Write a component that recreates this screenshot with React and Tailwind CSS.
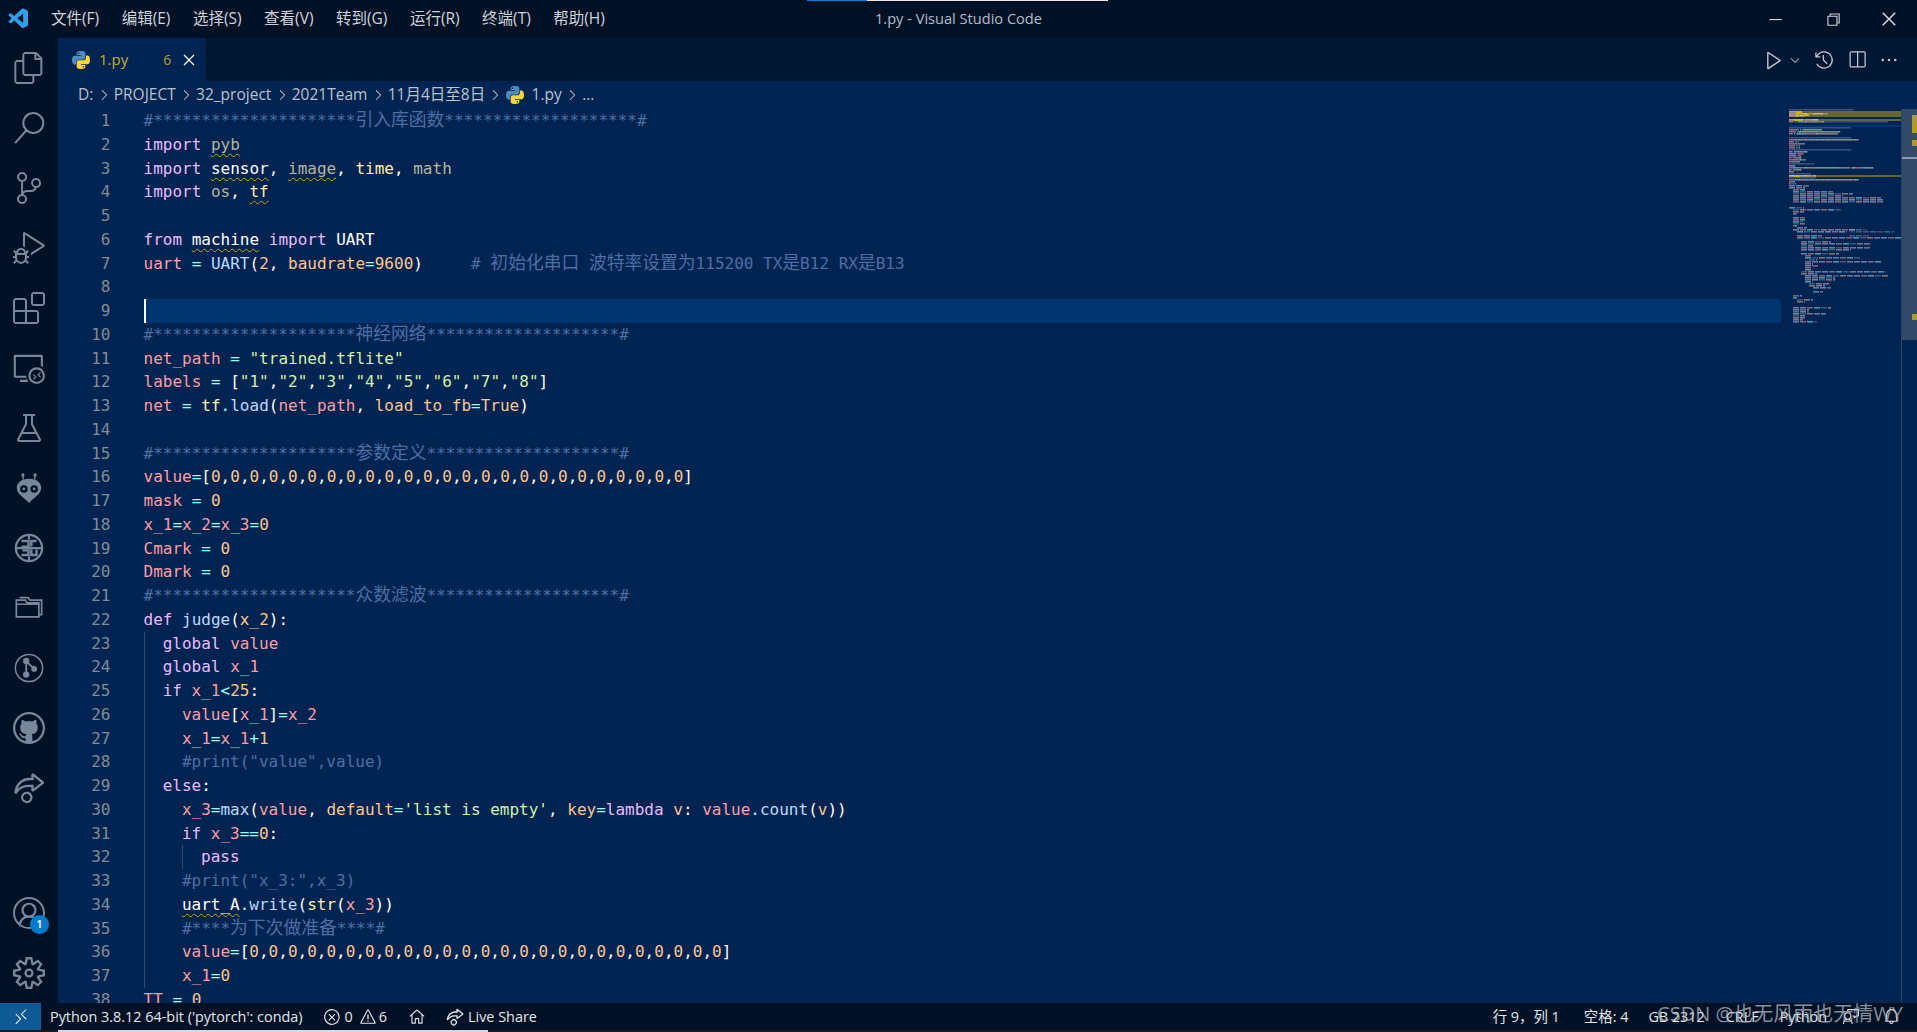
import {
  VscFiles, VscSearch, VscSourceControl, VscDebugAlt, VscExtensions, VscRemoteExplorer, VscBeaker,
  VscGithub, VscLiveShare, VscAccount, VscSettingsGear, VscRemote, VscError, VscWarning, VscHome,
  VscBell, VscFeedback, VscPlay, VscChevronDown, VscHistory, VscSplitHorizontal, VscEllipsis,
  VscClose, VscChevronRight, VscChromeMinimize, VscChromeRestore, VscChromeClose, VscVscode,
} from 'react-icons/vsc';

const MONO = "font-['DejaVu_Sans_Mono','Noto_Sans_CJK_SC',monospace]";
const UI = "font-['Open_Sans','Noto_Sans_CJK_SC',sans-serif]";

const TEXT = {
  k: 'text-[#ebbbff]', r: 'text-[#ff9da4]', o: 'text-[#ffc58f]', y: 'text-[#ffeead]', g: 'text-[#d1f1a9]',
  a: 'text-[#99ffff]', b: 'text-[#bbdaff]', w: 'text-white', c: 'text-[#4d6ea3]', m: 'text-[#b5b59d]',
};
const HEX = {
  k: '#ebbbff', r: '#ff9da4', o: '#ffc58f', y: '#ffeead', g: '#d1f1a9',
  a: '#99ffff', b: '#bbdaff', w: '#ffffff', c: '#7285b7', m: '#b5b59d',
};

const zeros = () => {
  const out = [];
  for (let i = 0; i < 25; i++) {
    out.push(['0', 'o']);
    if (i < 24) out.push([',', 'w']);
  }
  return out;
};
const valueRow = () => [['value', 'r'], ['=', 'a'], ['[', 'w'], ...zeros(), [']', 'w']];
const cm = (text) => [[text, 'c']];
const star = (n) => '*'.repeat(n);

// each line: [indent guides, tokens]; token = [text, colour, squiggle]
const LINES = [
  [[], cm('#' + star(21) + '引入库函数' + star(20) + '#')],
  [[], [['import', 'k'], [' ', 'w'], ['pyb', 'm', 1]]],
  [[], [['import', 'k'], [' ', 'w'], ['sensor', 'w', 1], [', ', 'w'], ['image', 'm', 1], [', ', 'w'], ['time', 'y'], [', ', 'w'], ['math', 'm']]],
  [[], [['import', 'k'], [' ', 'w'], ['os', 'm'], [', ', 'w'], ['tf', 'y', 1]]],
  [[], []],
  [[], [['from', 'k'], [' ', 'w'], ['machine', 'w', 1], [' ', 'w'], ['import', 'k'], [' UART', 'w']]],
  [[], [['uart', 'r'], [' ', 'w'], ['=', 'a'], [' ', 'w'], ['UART', 'b'], ['(', 'w'], ['2', 'o'], [', ', 'w'], ['baudrate', 'o'], ['=', 'a'], ['9600', 'o'], [')', 'w'], ['     # 初始化串口 波特率设置为115200 TX是B12 RX是B13', 'c']]],
  [[], []],
  [[], []],
  [[], cm('#' + star(21) + '神经网络' + star(20) + '#')],
  [[], [['net_path', 'r'], [' ', 'w'], ['=', 'a'], [' ', 'w'], ['"trained.tflite"', 'g']]],
  [[], [['labels', 'r'], [' ', 'w'], ['=', 'a'], [' [', 'w'], ['"1"', 'g'], [',', 'w'], ['"2"', 'g'], [',', 'w'], ['"3"', 'g'], [',', 'w'], ['"4"', 'g'], [',', 'w'], ['"5"', 'g'], [',', 'w'], ['"6"', 'g'], [',', 'w'], ['"7"', 'g'], [',', 'w'], ['"8"', 'g'], [']', 'w']]],
  [[], [['net', 'r'], [' ', 'w'], ['=', 'a'], [' ', 'w'], ['tf', 'y'], ['.', 'a'], ['load', 'b'], ['(', 'w'], ['net_path', 'r'], [', ', 'w'], ['load_to_fb', 'o'], ['=', 'a'], ['True', 'o'], [')', 'w']]],
  [[], []],
  [[], cm('#' + star(21) + '参数定义' + star(20) + '#')],
  [[], valueRow()],
  [[], [['mask', 'r'], [' ', 'w'], ['=', 'a'], [' ', 'w'], ['0', 'o']]],
  [[], [['x_1', 'r'], ['=', 'a'], ['x_2', 'r'], ['=', 'a'], ['x_3', 'r'], ['=', 'a'], ['0', 'o']]],
  [[], [['Cmark', 'r'], [' ', 'w'], ['=', 'a'], [' ', 'w'], ['0', 'o']]],
  [[], [['Dmark', 'r'], [' ', 'w'], ['=', 'a'], [' ', 'w'], ['0', 'o']]],
  [[], cm('#' + star(21) + '众数滤波' + star(20) + '#')],
  [[], [['def', 'k'], [' ', 'w'], ['judge', 'b'], ['(', 'w'], ['x_2', 'o'], ['):', 'w']]],
  [[1], [['global', 'k'], [' ', 'w'], ['value', 'r']]],
  [[1], [['global', 'k'], [' ', 'w'], ['x_1', 'r']]],
  [[1], [['if', 'k'], [' ', 'w'], ['x_1', 'r'], ['<', 'a'], ['25', 'o'], [':', 'w']]],
  [[1, 0], [['value', 'r'], ['[', 'w'], ['x_1', 'r'], [']', 'w'], ['=', 'a'], ['x_2', 'r']]],
  [[1, 0], [['x_1', 'r'], ['=', 'a'], ['x_1', 'r'], ['+', 'a'], ['1', 'o']]],
  [[1, 0], cm('#print("value",value)')],
  [[1], [['else', 'k'], [':', 'w']]],
  [[1, 0], [['x_3', 'r'], ['=', 'a'], ['max', 'b'], ['(', 'w'], ['value', 'r'], [', ', 'w'], ['default', 'o'], ['=', 'a'], ["'list is empty'", 'g'], [', ', 'w'], ['key', 'o'], ['=', 'a'], ['lambda', 'k'], [' ', 'w'], ['v', 'o'], [': ', 'w'], ['value', 'r'], ['.', 'a'], ['count', 'b'], ['(', 'w'], ['v', 'o'], ['))', 'w']]],
  [[1, 0], [['if', 'k'], [' ', 'w'], ['x_3', 'r'], ['==', 'a'], ['0', 'o'], [':', 'w']]],
  [[1, 0, 1], [['pass', 'k']]],
  [[1, 0], cm('#print("x_3:",x_3)')],
  [[1, 0], [['uart_A', 'w', 1], ['.', 'a'], ['write', 'b'], ['(', 'w'], ['str', 'y'], ['(', 'w'], ['x_3', 'r'], ['))', 'w']]],
  [[1, 0], cm('#****为下次做准备****#')],
  [[1, 0], valueRow()],
  [[1, 0], [['x_1', 'r'], ['=', 'a'], ['0', 'o']]],
  [[], [['TT', 'r'], [' ', 'w'], ['=', 'a'], [' ', 'w'], ['0', 'o']]],
];

// rest of the file as seen in the minimap: [row, x, width]
const MINI_ROWS = [
  [38, 0, 20], [39, 0, 16], [40, 4, 12], [41, 4, 40], [42, 4, 60], [43, 4, 50], [44, 4, 88], [45, 4, 90], [46, 4, 90],
  [49, 0, 15], [50, 4, 48], [51, 4, 11], [52, 4, 4], [54, 4, 12], [55, 4, 12], [56, 4, 10], [57, 4, 12], [58, 4, 4], [59, 8, 10],
  [60, 4, 62], [60, 60, 18], [61, 8, 50], [61, 60, 46], [63, 8, 25], [63, 60, 20], [64, 8, 104], [66, 12, 30], [67, 12, 70],
  [68, 12, 12], [69, 12, 70], [70, 12, 50], [72, 12, 38], [73, 16, 6], [74, 16, 55], [75, 20, 8], [76, 16, 76], [77, 16, 8],
  [78, 16, 14], [79, 16, 6], [80, 16, 8], [81, 12, 85], [82, 12, 16], [83, 16, 84], [84, 16, 30], [85, 16, 30], [86, 16, 8],
  [87, 20, 20], [88, 20, 16], [89, 24, 18], [91, 24, 10], [93, 4, 9], [94, 4, 4], [95, 8, 16], [96, 8, 8], [99, 4, 38],
  [100, 4, 16], [101, 4, 16], [102, 4, 33], [103, 4, 12], [104, 4, 12], [105, 4, 10], [106, 4, 24],
];
const MINI_COLORS = ['#ebbbff', '#bbdaff', '#ff9da4', '#99ffff', '#7285b7', '#ffc58f'];

function PyIcon({ className }) {
  return (
    <svg viewBox="0 0 24 24" className={className}>
      <path fill="#4b8bbe" fillRule="evenodd" d="M11.914 0C5.82 0 6.2 2.656 6.2 2.656l.007 2.752h5.814v.826H3.9S0 5.789 0 11.969c0 6.18 3.403 5.96 3.403 5.96h2.03v-2.867s-.109-3.42 3.35-3.42h5.766s3.24.052 3.24-3.148V3.202S18.28 0 11.913 0zM8.708 1.85c.578 0 1.046.47 1.046 1.052 0 .581-.468 1.051-1.046 1.051-.579 0-1.046-.47-1.046-1.051 0-.582.467-1.052 1.046-1.052z" />
      <path fill="#ffd43b" fillRule="evenodd" d="M12.087 24c6.092 0 5.712-2.656 5.712-2.656l-.007-2.752h-5.814v-.826h8.123s3.9.445 3.9-5.735c0-6.18-3.404-5.96-3.404-5.96h-2.03v2.867s.109 3.42-3.35 3.42H9.45s-3.24-.052-3.24 3.148v5.292S5.72 24 12.087 24zm3.206-1.85c-.578 0-1.046-.47-1.046-1.052 0-.581.468-1.051 1.046-1.051.579 0 1.046.47 1.046 1.051 0 .582-.467 1.052-1.046 1.052z" />
    </svg>
  );
}

function AlienIcon() {
  return (
    <svg viewBox="0 0 32 34" className="w-[30px] h-[32px]">
      <path stroke="currentColor" strokeWidth="1.5" fill="none" d="M10 8 9.5 3M22 8l.5-5" />
      <circle cx="9.5" cy="3" r="1.8" fill="currentColor" />
      <circle cx="22.5" cy="3" r="1.8" fill="currentColor" />
      <path fill="currentColor" d="M16 7C8 7 3 11 3 17c0 7 8 10 13 16 5-6 13-9 13-16 0-6-5-10-13-10z" />
      <circle cx="10.5" cy="18" r="4" fill="#001126" />
      <circle cx="21.5" cy="18" r="4" fill="#001126" />
      <circle cx="10.5" cy="18" r="1.5" fill="currentColor" />
      <circle cx="21.5" cy="18" r="1.5" fill="currentColor" />
    </svg>
  );
}

function GlobeIcon() {
  return (
    <svg viewBox="0 0 32 32" className="w-[30px] h-[30px]" fill="none" stroke="currentColor">
      <circle cx="16" cy="16" r="14" strokeWidth="2.4" />
      <path strokeWidth="2.4" d="M3 16h26M16 3v4M16 25v4" />
      <path strokeWidth="2.6" d="M8 8.5h7.5v6H8M24 8.5h-5.5v6M8 23.5h7.5v-5H9M24 17.5v6h-5.5v-6" />
    </svg>
  );
}

function FolderIcon() {
  return (
    <svg viewBox="0 0 32 32" className="w-[30px] h-[30px]" fill="none" stroke="currentColor" strokeWidth="1.8">
      <path d="M2.5 12v13.5h24V12H2.5zM2.5 12V7.5H12l2 3h12.5V12" />
      <path d="M6 5h9l2 2.5h12.5V23h-3" />
    </svg>
  );
}

function GitGraphIcon() {
  return (
    <svg viewBox="0 0 32 32" className="w-[30px] h-[30px]" fill="none" stroke="currentColor" strokeWidth="1.6">
      <circle cx="16" cy="16" r="14.5" />
      <path strokeWidth="2" d="M13 9v14M13 9l9 8" />
      <circle cx="13" cy="8.5" r="2.6" fill="currentColor" />
      <circle cx="13" cy="23" r="2.6" fill="currentColor" />
      <circle cx="21.5" cy="17" r="2.3" fill="currentColor" />
    </svg>
  );
}

function ActivityItem({ children }) {
  return <div className="h-[60px] flex items-center justify-center text-[#76889b]">{children}</div>;
}

function ActivityBar() {
  return (
    <div className="w-[58px] shrink-0 bg-[#001126] flex flex-col justify-between">
      <div className="flex flex-col">
        <ActivityItem><VscFiles size={32} /></ActivityItem>
        <ActivityItem><VscSearch size={32} /></ActivityItem>
        <ActivityItem><VscSourceControl size={32} /></ActivityItem>
        <ActivityItem><VscDebugAlt size={32} /></ActivityItem>
        <ActivityItem><VscExtensions size={32} /></ActivityItem>
        <ActivityItem><VscRemoteExplorer size={32} /></ActivityItem>
        <ActivityItem><VscBeaker size={32} /></ActivityItem>
        <ActivityItem><AlienIcon /></ActivityItem>
        <ActivityItem><GlobeIcon /></ActivityItem>
        <ActivityItem><FolderIcon /></ActivityItem>
        <ActivityItem><GitGraphIcon /></ActivityItem>
        <ActivityItem><VscGithub size={32} /></ActivityItem>
        <ActivityItem><VscLiveShare size={32} /></ActivityItem>
      </div>
      <div className="flex flex-col">
        <ActivityItem>
          <div className="relative">
            <VscAccount size={32} />
            <span className="absolute -right-[4px] -bottom-[5px] w-[19px] h-[19px] rounded-full bg-[#007acc] text-white text-[11px] font-semibold flex items-center justify-center">1</span>
          </div>
        </ActivityItem>
        <ActivityItem><VscSettingsGear size={32} /></ActivityItem>
      </div>
    </div>
  );
}

function TitleBar() {
  const menus = ['文件(F)', '编辑(E)', '选择(S)', '查看(V)', '转到(G)', '运行(R)', '终端(T)', '帮助(H)'];
  return (
    <div className={`relative h-[38px] shrink-0 bg-[#001126] grid grid-cols-[1fr_auto_1fr] items-center ${UI}`}>
      <div className="absolute top-0 left-[807px] flex h-px">
        <div className="w-[60px] bg-[#0078d4]" />
        <div className="w-[241px] bg-[#e8e8e8]" />
      </div>
      <div className="flex items-center">
        <VscVscode size={24} className="ml-[7px] text-[#2f9fe8]" />
        <div className="flex ml-[20px] gap-[22.5px] text-[15.5px] text-[#d0d4da] whitespace-nowrap">
          {menus.map((m) => <span key={m}>{m}</span>)}
        </div>
      </div>
      <div className="text-[14.6px] text-[#b5bcc5]">1.py - Visual Studio Code</div>
      <div className="flex items-center justify-end text-[#d0d4da]">
        <div className="w-[58px] flex justify-center"><VscChromeMinimize size={18} /></div>
        <div className="w-[57px] flex justify-center"><VscChromeRestore size={18} /></div>
        <div className="w-[56px] flex justify-center"><VscChromeClose size={20} /></div>
      </div>
    </div>
  );
}

function TabBar() {
  return (
    <div className={`h-[43px] shrink-0 bg-[#001733] flex items-center justify-between ${UI}`}>
      <div className="w-[149px] h-full bg-[#002451] border-r border-[#001126] flex items-center pl-[14px]">
        <PyIcon className="w-[18px] h-[18px]" />
        <span className="ml-[9px] text-[15px] text-[#c9ad2c]">1.py</span>
        <span className="ml-[35px] text-[14px] text-[#b39c2a]">6</span>
        <VscClose size={20} className="ml-[8px] text-white" />
      </div>
      <div className="flex items-center text-[#c5c9cf]">
        <VscPlay size={22} />
        <VscChevronDown size={14} className="ml-[3px]" />
        <VscHistory size={20} className="ml-[12px]" />
        <VscSplitHorizontal size={20} className="ml-[13px]" />
        <VscEllipsis size={20} className="ml-[12px] mr-[18px]" />
      </div>
    </div>
  );
}

function Crumb({ children }) {
  return (
    <>
      <span>{children}</span>
      <VscChevronRight size={16} className="mx-[2.2px] text-[#c0c8d4]" />
    </>
  );
}

function Breadcrumbs() {
  return (
    <div className={`h-[28px] shrink-0 flex items-center pl-[20px] text-[15.5px] text-[#b8c2d0] whitespace-nowrap ${UI}`}>
      <Crumb>D:</Crumb>
      <Crumb>PROJECT</Crumb>
      <Crumb>32_project</Crumb>
      <Crumb>2021Team</Crumb>
      <Crumb>11月4日至8日</Crumb>
      <PyIcon className="w-[18px] h-[18px] mr-[8px]" />
      <Crumb>1.py</Crumb>
      <span>...</span>
    </div>
  );
}

// CJK glyphs are a bit larger than the latin cells in the original font
function Text({ children }) {
  return String(children)
    .split(/([\u4e00-\u9fff]+)/)
    .map((part, i) => (i % 2 ? <span key={i} className="text-[17.8px] leading-[0]">{part}</span> : part));
}

function Token({ token }) {
  const [text, color, squiggle] = token;
  const wavy = squiggle ? 'underline decoration-wavy decoration-[#cca700] decoration-1 underline-offset-[3px] [text-decoration-skip-ink:none]' : '';
  return <span className={`${TEXT[color]} ${wavy}`}><Text>{text}</Text></span>;
}

function CodeLine({ line, index }) {
  const [guides, tokens] = line;
  const active = index === 8;
  return (
    <div className="flex h-[23.75px] leading-[23.75px]">
      <div className="w-[52.5px] shrink-0 text-right text-[#838b94]">{index + 1}</div>
      <div className="w-[33px] shrink-0" />
      <div className={`flex-1 flex whitespace-pre ${active ? 'bg-[#00346e]' : ''}`}>
        {active && <div className="w-[2px] bg-white" />}
        {guides.map((on, i) => (
          <div key={i} className={`w-[19.2px] shrink-0 ${on ? 'border-l border-[#2c4a75]' : ''}`} />
        ))}
        <div>{tokens.map((t, i) => <Token key={i} token={t} />)}</div>
      </div>
    </div>
  );
}

function miniLength(text) {
  return text.replace(/[\u4e00-\u9fff]/g, '__').length;
}

function Minimap() {
  const rects = [];
  LINES.slice(0, 38).forEach((line, row) => {
    let col = 0;
    line[1].forEach(([text, color]) => {
      const len = miniLength(text);
      if (text.trim()) {
        rects.push(<rect key={`${row}-${col}`} x={col * 1.22} y={row * 2} width={len * 1.22} height={1.6} fill={HEX[color]} opacity={color === 'c' ? 0.45 : 0.55} />);
      }
      col += len;
    });
  });
  MINI_ROWS.forEach(([row, x, w], r) => {
    for (let p = 0, n = r; p < w; p += 7, n++) {
      rects.push(<rect key={`m${r}-${p}`} x={x + p} y={row * 2} width={Math.min(6, w - p)} height={1.6} fill={MINI_COLORS[n % 6]} opacity={x >= 60 ? 0.3 : 0.5} />);
    }
  });
  return (
    <svg width="112" height="216" viewBox="0 0 112 216" className="shrink-0">
      <rect x="0" y="2" width="112" height="6" fill="#7a7226" opacity="0.85" />
      <rect x="0" y="10" width="112" height="2" fill="#7a7226" opacity="0.85" />
      <rect x="0" y="66" width="112" height="2" fill="#7a7226" opacity="0.85" />
      <rect x="0" y="16" width="112" height="2" fill="#00346e" />
      {rects}
      <path d="M7 2h6v3h-3v3H7z M15 5h5v2h-5z M5 10h7v2H5z M5 66h6v2H5z" fill="#d1b300" />
    </svg>
  );
}

function OverviewRuler() {
  return (
    <div className="w-[16px] shrink-0 self-stretch border-l border-[#2a4465] flex flex-col">
      <div className="h-[231px] bg-[#33496a] flex flex-col items-end">
        <div className="h-[6px]" />
        <div className="w-[5px] h-[18px] bg-[#ae9b26]" />
        <div className="h-[7px]" />
        <div className="w-[5px] h-[6px] bg-[#ae9b26]" />
        <div className="h-[11px]" />
        <div className="w-full h-[2px] bg-[#8c99a8]" />
        <div className="h-[155px]" />
        <div className="w-[5px] h-[6px] bg-[#ae9b26]" />
      </div>
    </div>
  );
}

function Editor() {
  return (
    <div className="flex-1 min-h-0 flex overflow-hidden">
      <div className={`flex-1 min-w-0 overflow-hidden text-[16px] ${MONO}`}>
        {LINES.map((line, i) => <CodeLine key={i} line={line} index={i} />)}
      </div>
      <div className="ml-[8px] flex"><Minimap /></div>
      <OverviewRuler />
    </div>
  );
}

function StatusBar() {
  return (
    <div className={`relative h-[27px] shrink-0 bg-[#001126] flex items-center justify-between text-[14.4px] text-[#e4e7ea] whitespace-nowrap ${UI}`}>
      <div className="flex items-center h-full">
        <div className="w-[41px] h-full bg-[#0e5a94] flex items-center justify-center"><VscRemote size={18} className="text-white" /></div>
        <span className="ml-[9px]">Python 3.8.12 64-bit ('pytorch': conda)</span>
        <VscError size={18} className="ml-[20px]" />
        <span className="ml-[4px]">0</span>
        <VscWarning size={18} className="ml-[6px]" />
        <span className="ml-[2px]">6</span>
        <VscHome size={18} className="ml-[21px]" />
        <VscLiveShare size={18} className="ml-[20px]" />
        <span className="ml-[4px]">Live Share</span>
      </div>
      <div className="flex items-center h-full">
        <span>行 9，列 1</span>
        <span className="ml-[24px]">空格: 4</span>
        <span className="ml-[20px]">GB 2312</span>
        <span className="ml-[21px]">CRLF</span>
        <span className="ml-[21px]">Python</span>
        <VscFeedback size={17} className="ml-[16px]" />
        <VscBell size={17} className="ml-[23px] mr-[17px]" />
      </div>
      <div className="absolute right-[14px] top-[-4px] text-[20px] text-[#b4bac2]/75 pointer-events-none">CSDN @也无风雨也无情WY</div>
    </div>
  );
}

function App() {
  return (
    <div className="h-screen w-full flex flex-col overflow-hidden bg-[#002451]">
      <TitleBar />
      <div className="flex-1 min-h-0 flex">
        <ActivityBar />
        <div className="flex-1 min-w-0 flex flex-col">
          <TabBar />
          <Breadcrumbs />
          <Editor />
        </div>
      </div>
      <StatusBar />
      <div className="h-[2px] shrink-0 bg-[#1a1a1a] flex">
        <div className="w-[58px]" />
        <div className="w-[430px] bg-[#d9d9d9]" />
      </div>
    </div>
  );
}

export default App;
